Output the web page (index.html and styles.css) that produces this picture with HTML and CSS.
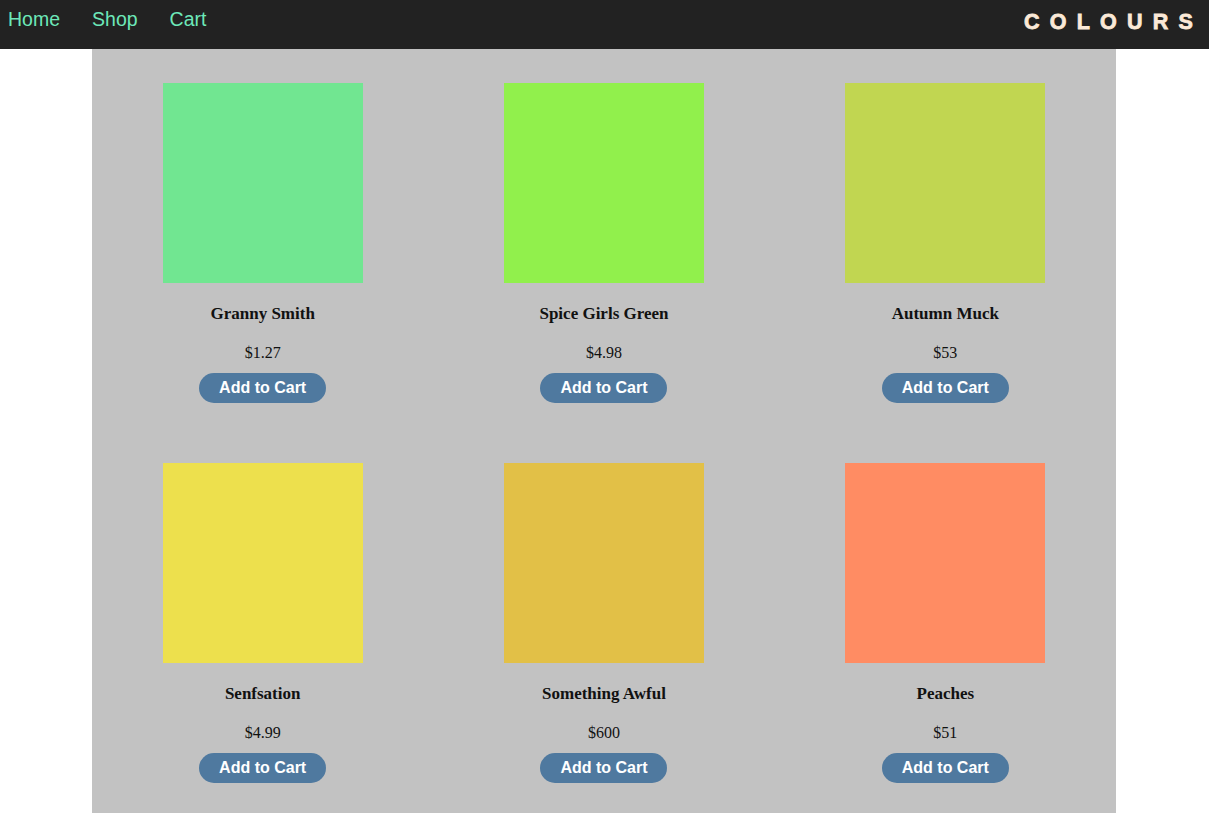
FILE: index.html
```html
<!DOCTYPE html>
<html lang="en">
<head>
<meta charset="utf-8">
<title>Colours</title>
<link rel="stylesheet" href="styles.css">
</head>
<body>
<header class="topbar">
  <nav class="nav">
    <a class="nav-link" href="#">Home</a>
    <a class="nav-link" href="#">Shop</a>
    <a class="nav-link" href="#">Cart</a>
  </nav>
  <div class="logo">COLOURS</div>
</header>
<main class="shop">
  <div class="card">
    <div class="swatch" style="background:#71e691"></div>
    <h3 class="name">Granny Smith</h3>
    <p class="price">$1.27</p>
    <button class="add">Add to Cart</button>
  </div>
  <div class="card">
    <div class="swatch" style="background:#91f04c"></div>
    <h3 class="name">Spice Girls Green</h3>
    <p class="price">$4.98</p>
    <button class="add">Add to Cart</button>
  </div>
  <div class="card">
    <div class="swatch" style="background:#c1d651"></div>
    <h3 class="name">Autumn Muck</h3>
    <p class="price">$53</p>
    <button class="add">Add to Cart</button>
  </div>
  <div class="card">
    <div class="swatch" style="background:#ede04d"></div>
    <h3 class="name">Senfsation</h3>
    <p class="price">$4.99</p>
    <button class="add">Add to Cart</button>
  </div>
  <div class="card">
    <div class="swatch" style="background:#e2c047"></div>
    <h3 class="name">Something Awful</h3>
    <p class="price">$600</p>
    <button class="add">Add to Cart</button>
  </div>
  <div class="card">
    <div class="swatch" style="background:#ff8c63"></div>
    <h3 class="name">Peaches</h3>
    <p class="price">$51</p>
    <button class="add">Add to Cart</button>
  </div>
</main>
</body>
</html>
```
FILE: styles.css
```css
* { box-sizing: border-box; }
body {
  margin: 0;
  background: #ffffff;
  font-family: "Liberation Serif", serif;
}
.topbar {
  height: 49px;
  background: #222222;
  display: flex;
  justify-content: space-between;
  align-items: flex-start;
  padding: 7px 8px 0 8px;
}
.nav {
  display: flex;
  gap: 32px;
}
.nav-link {
  font-family: "Liberation Sans", Arial, sans-serif;
  font-size: 19.5px;
  line-height: 24px;
  color: #6de8b9;
  text-decoration: none;
}
.logo {
  font-family: "Liberation Sans", Arial, sans-serif;
  font-weight: 900;
  font-size: 21.5px;
  line-height: 28px;
  letter-spacing: 10.2px;
  color: #fbe9d7;
  margin: 1px -2px 0 0;
  -webkit-text-stroke: 0.8px #fbe9d7;
}
.shop {
  width: 1024px;
  margin: 0 0 20px 92px;
  background: #c2c2c2;
  display: grid;
  grid-template-columns: repeat(3, 1fr);
  row-gap: 60px;
  padding: 34px 0 30px 0;
}
.card {
  display: flex;
  flex-direction: column;
  align-items: center;
}
.swatch {
  width: 200px;
  height: 200px;
}
.name {
  margin: 21px 0 0 0;
  font-size: 17px;
  line-height: 20px;
  font-weight: bold;
  color: #111;
}
.price {
  margin: 19px 0 0 0;
  font-size: 16px;
  line-height: 20px;
  color: #111;
}
.add {
  margin-top: 10px;
  width: 127px;
  height: 30px;
  border: none;
  border-radius: 15px;
  background: #4f799f;
  color: #ffffff;
  font-family: "Liberation Sans", Arial, sans-serif;
  font-weight: bold;
  font-size: 16px;
  padding: 0;
}
```
